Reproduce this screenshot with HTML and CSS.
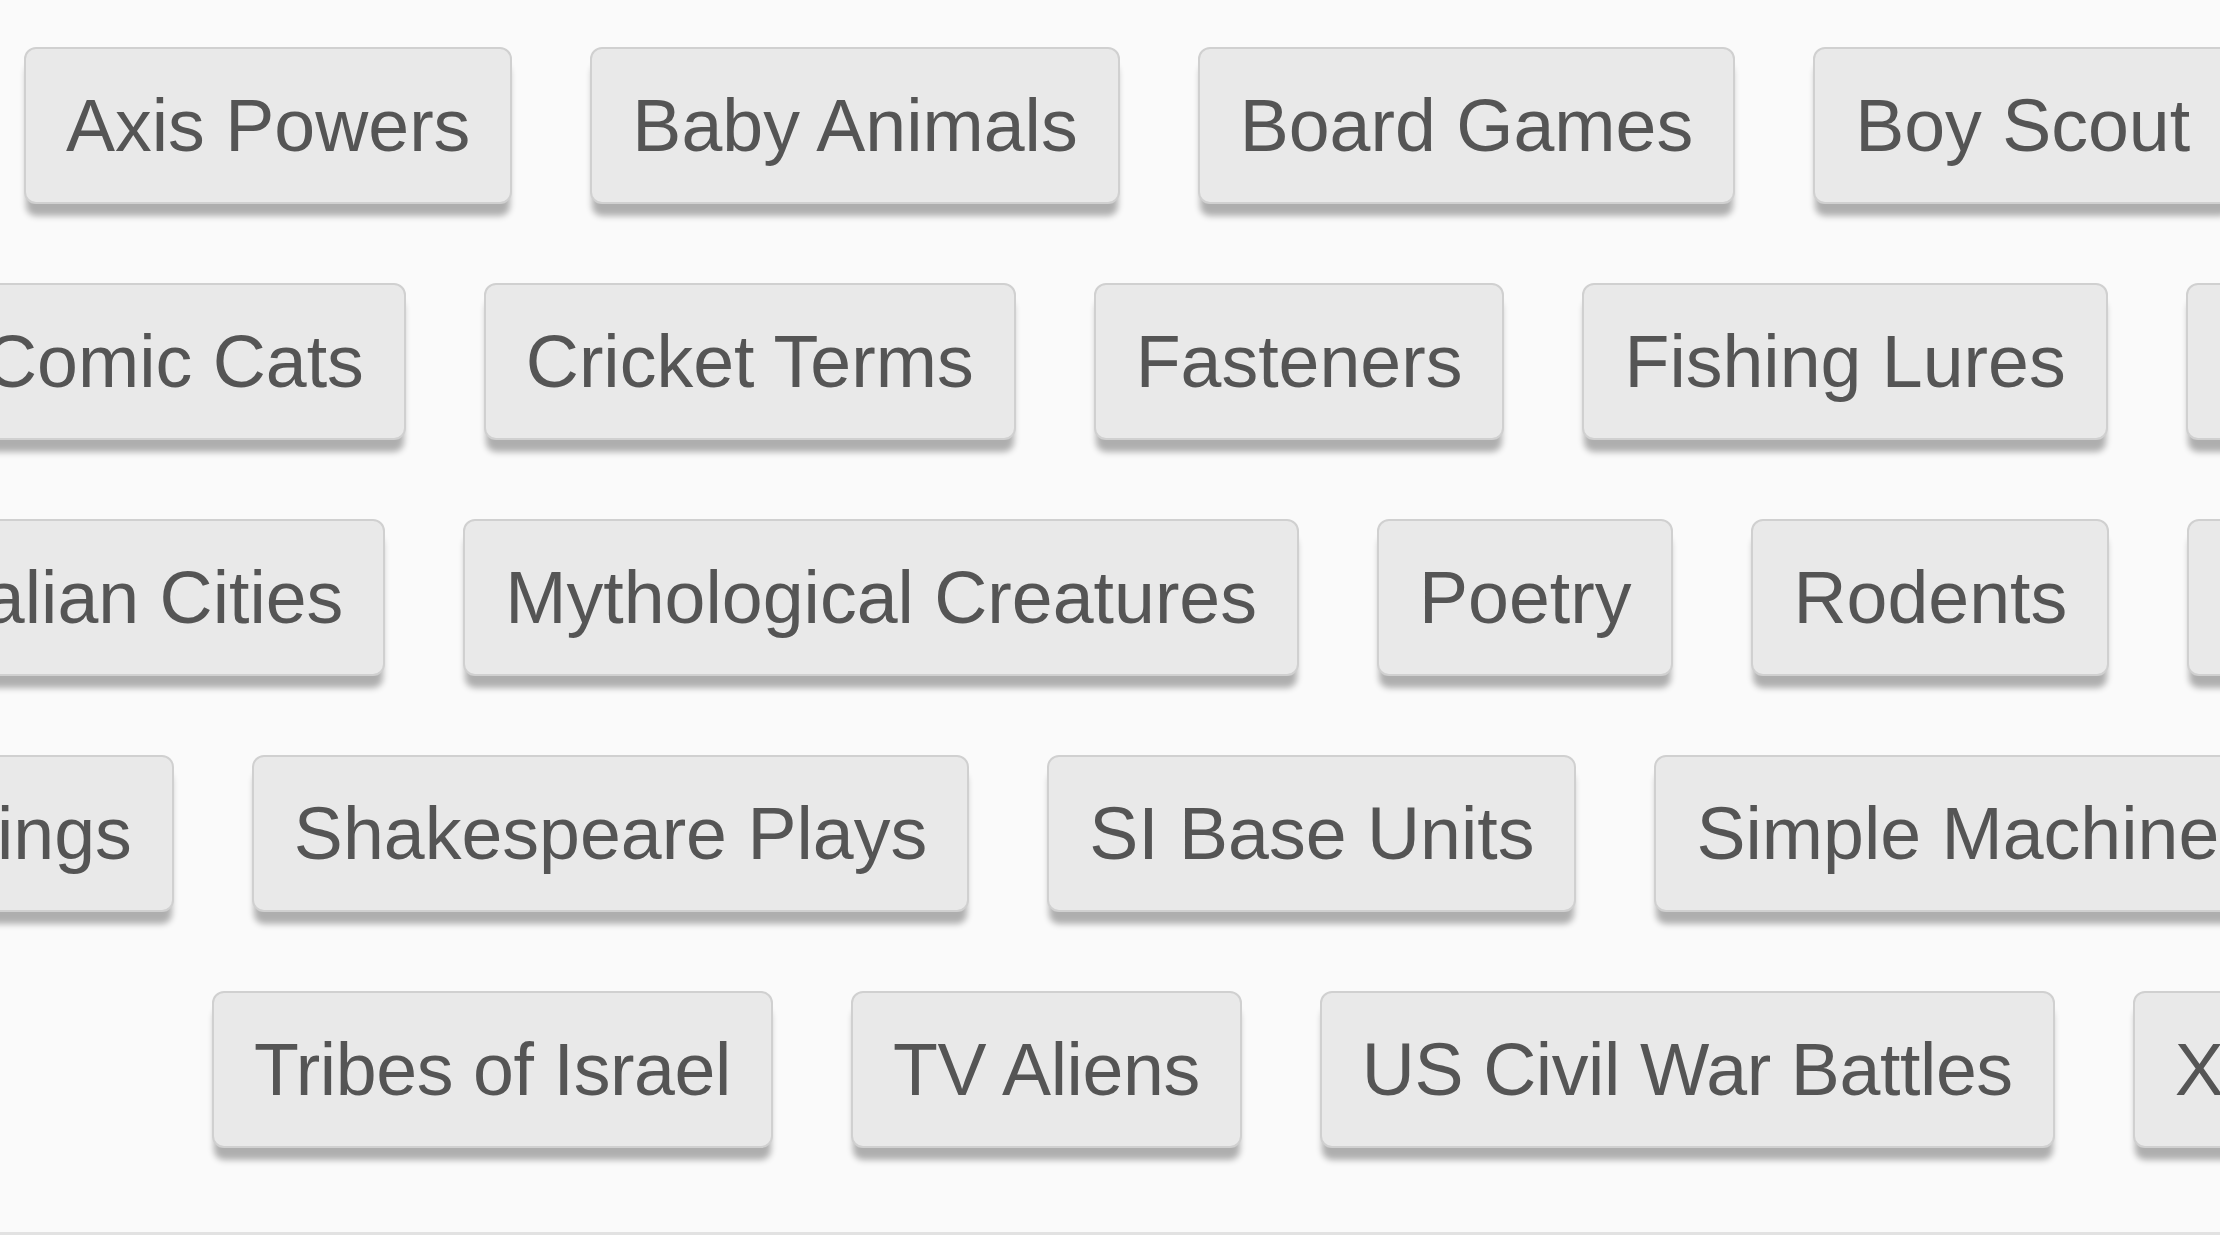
FILE: index.html
```html
<!DOCTYPE html>
<html>
  <head>
    <title>Categories</title>
    <link rel="stylesheet" href="styles.css">
  </head>
  <body>
    <div class="board">
      <div class="tag-row row-1">
        <div class="tag">Axis Powers</div>
        <div class="tag">Baby Animals</div>
        <div class="tag">Board Games</div>
        <div class="tag">Boy Scout</div>
      </div>
      <div class="tag-row row-2">
        <div class="tag">Comic Cats</div>
        <div class="tag">Cricket Terms</div>
        <div class="tag">Fasteners</div>
        <div class="tag">Fishing Lures</div>
        <div class="tag">Flags</div>
      </div>
      <div class="tag-row row-3">
        <div class="tag">Italian Cities</div>
        <div class="tag">Mythological Creatures</div>
        <div class="tag">Poetry</div>
        <div class="tag">Rodents</div>
        <div class="tag">Roman Numerals</div>
      </div>
      <div class="tag-row row-4">
        <div class="tag">Royal Weddings</div>
        <div class="tag">Shakespeare Plays</div>
        <div class="tag">SI Base Units</div>
        <div class="tag">Simple Machines</div>
      </div>
      <div class="tag-row row-5">
        <div class="tag">Tribes of Israel</div>
        <div class="tag">TV Aliens</div>
        <div class="tag">US Civil War Battles</div>
        <div class="tag">Xenomorphs</div>
      </div>
    </div>
  </body>
</html>
```

FILE: styles.css
```css
body {
  margin: 0;
  background-color: #fff;
  font-family: "Liberation Sans", Arial, Helvetica, sans-serif;
}

.board {
  height: 1235px;
  padding-top: 47px;
  box-sizing: border-box;
  display: flex;
  flex-direction: column;
  gap: 79px;
  overflow: hidden;
  background-color: #fafafa;
  border-bottom: 3px solid #e2e2e2;
}

.tag-row {
  display: flex;
  gap: 78px;
  white-space: nowrap;
}

.row-1 {
  margin-left: 24px;
}

.row-2 {
  margin-left: -58px;
}

.row-3 {
  margin-left: -99px;
}

.row-4 {
  margin-left: -444px;
}

.row-5 {
  margin-left: 212px;
}

.row-5 .tag {
  letter-spacing: -0.4px;
}

.tag {
  flex-shrink: 0;
  padding: 34px 40px;
  font-size: 73.5px;
  line-height: 85px;
  color: #555;
  background-color: #e9e9e9;
  border: 2px solid #d0d0d0;
  border-radius: 12px;
  box-shadow: 0 14px 6px -2px rgba(0, 0, 0, 0.3);
  cursor: pointer;
}
```
